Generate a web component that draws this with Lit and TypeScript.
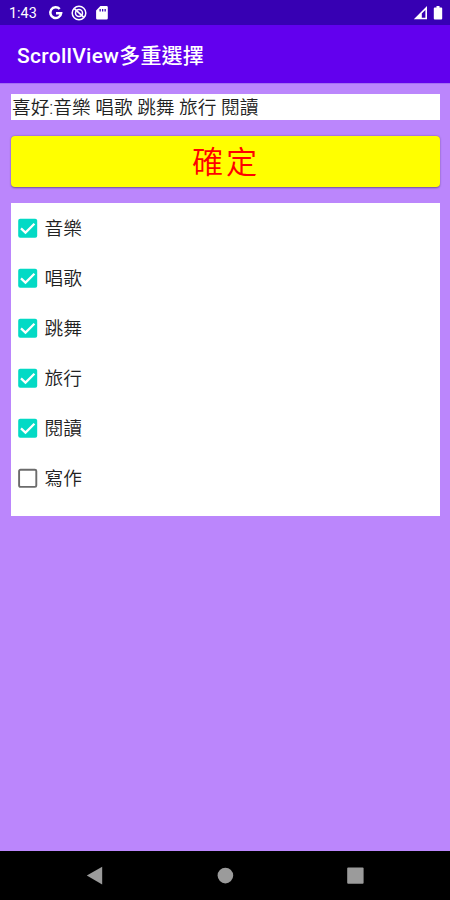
import { LitElement, html, css, svg } from "lit";
import { customElement, property, state } from "lit/decorators.js";

@customElement("status-bar")
class StatusBar extends LitElement {
  static styles = css`
    :host {
      display: flex;
      align-items: center;
      height: 25px;
      flex: none;
      box-sizing: border-box;
      padding: 1px 5px 0 9px;
      background: #3700b3;
      color: #fff;
      font: 400 14.4px/25px Roboto, sans-serif;
    }
    .time { width: 39px; }
    .left { display: block; flex: none; }
    .right { display: block; flex: none; margin-left: auto; }
  `;
  render() {
    return html`
      <span class="time">1:43</span>
      <svg class="left" width="62" height="16" viewBox="0 0 62 16">
        <path d="M11.7 4A5.4 5.4 0 1 0 13.1 8.3H8" fill="none" stroke="#fff" stroke-width="2.5" />
        <g fill="none" stroke="#fff">
          <circle cx="31" cy="8" r="6.8" stroke-width="1.5" />
          <circle cx="31" cy="8" r="3.5" stroke-width="1.5" />
          <path d="M26.4 3.6L35.8 12.4" stroke-width="1.7" />
        </g>
        <path
          fill="#fff"
          fill-rule="evenodd"
          d="M52.4 1H58.6A1.2 1.2 0 0 1 59.8 2.2V13.3A1.2 1.2 0 0 1 58.6 14.5H49.3A1.2 1.2 0 0 1 48.1 13.3V5.5ZM51.5 4V6.6H52.8V4ZM54 4V6.6H55.3V4ZM56.5 4V6.6H57.8V4Z"
        />
      </svg>
      <svg class="right" width="32" height="16" viewBox="0 0 32 16">
        <path fill="#fff" fill-rule="evenodd" d="M0.8 14.3L14 1V14.3ZM8.8 12.8H12.4V5L8.8 8.6Z" />
        <path
          fill="#fff"
          d="M23.5 1.1H26.5V2.4H28.2A1 1 0 0 1 29.2 3.4V13.4A1 1 0 0 1 28.2 14.4H21.8A1 1 0 0 1 20.8 13.4V3.4A1 1 0 0 1 21.8 2.4H23.5Z"
        />
      </svg>
    `;
  }
}

@customElement("check-row")
class CheckRow extends LitElement {
  @property() label = "";
  @property({ type: Boolean }) checked = false;

  static styles = css`
    :host {
      display: flex;
      align-items: center;
      height: 50px;
      padding-left: 7px;
      gap: 6.5px;
      cursor: pointer;
      color: #222;
      font: 350 18.7px/26px Roboto, "Noto Sans CJK TC", sans-serif;
    }
    .box { display: block; flex: none; }
    .label { padding-top: 3px; }
  `;
  render() {
    return html`
      <svg class="box" width="20" height="20" viewBox="0 0 20 20">
        ${this.checked
          ? svg`<rect x="0.2" y="0.8" width="19" height="19" rx="2" fill="#03dac5" />
              <path d="M3 10.4L7.5 14.6L16.4 5.8" fill="none" stroke="#fff" stroke-width="2.3" />`
          : svg`<rect x="1.1" y="1.7" width="17.2" height="17.2" rx="1.4" fill="none" stroke="#6b6b6b" stroke-width="1.9" />`}
      </svg>
      <span class="label">${this.label}</span>
    `;
  }
}

@customElement("app-root")
class AppRoot extends LitElement {
  @state() items = [
    { label: "音樂", checked: true },
    { label: "唱歌", checked: true },
    { label: "跳舞", checked: true },
    { label: "旅行", checked: true },
    { label: "閱讀", checked: true },
    { label: "寫作", checked: false },
  ];
  @state() result = "喜好:音樂 唱歌 跳舞 旅行 閱讀";

  static styles = css`
    :host {
      display: flex;
      flex-direction: column;
      height: 900px;
      overflow: hidden;
      background: #bb86fc;
      font-family: Roboto, "Noto Sans CJK TC", sans-serif;
    }
    .title {
      flex: none;
      height: 58px;
      padding-left: 17px;
      background: #6200ee;
      color: #fff;
      font-size: 21px;
      font-weight: 500;
      line-height: 62px;
      letter-spacing: 0.3px;
      white-space: nowrap;
    }
    .cjk { letter-spacing: 0.2px; }
    .content {
      flex: 1;
      display: flex;
      flex-direction: column;
      padding: 10px 10px 0 11px;
      border-top: 1px solid #a36ff2;
      box-sizing: border-box;
    }
    .result {
      height: 26px;
      padding-left: 1px;
      background: #fff;
      color: #222;
      font-size: 18.7px;
      font-weight: 350;
      line-height: 28px;
      white-space: nowrap;
    }
    .confirm {
      height: 50.5px;
      margin-top: 16.4px;
      padding: 0 0 0 1px;
      border: 0;
      border-radius: 4px;
      background: #ff0;
      box-shadow: 0 0.5px 2px rgba(0, 0, 0, 0.4);
      color: #f00;
      font: 350 31.2px/54px Roboto, "Noto Sans CJK TC", sans-serif;
      letter-spacing: 0.089em;
      cursor: pointer;
    }
    .list {
      height: 313px;
      margin-top: 16.1px;
      background: #fff;
    }
    .nav {
      flex: none;
      display: flex;
      justify-content: center;
      align-items: center;
      height: 49px;
      background: #000;
    }
  `;

  toggle(i: number) {
    this.items = this.items.map((it, n) => (n === i ? { ...it, checked: !it.checked } : it));
  }

  confirm() {
    this.result = "喜好:" + this.items.filter((it) => it.checked).map((it) => it.label).join(" ");
  }

  render() {
    return html`
      <status-bar></status-bar>
      <div class="title">ScrollView<span class="cjk">多重選擇</span></div>
      <div class="content">
        <div class="result">${this.result}</div>
        <button class="confirm" @click=${this.confirm}>確定</button>
        <div class="list">
          ${this.items.map(
            (it, i) => html`<check-row
              .label=${it.label}
              .checked=${it.checked}
              @click=${() => this.toggle(i)}
            ></check-row>`
          )}
        </div>
      </div>
      <div class="nav">
        <svg width="300" height="20" viewBox="0 0 300 20">
          <g fill="#9b9b9b">
            <path d="M11.8 9.6L27.2 0.8V18.4Z" />
            <circle cx="150.4" cy="9.6" r="7.8" />
            <rect x="272.2" y="1.4" width="16.4" height="16.4" rx="1" />
          </g>
        </svg>
      </div>
    `;
  }
}
